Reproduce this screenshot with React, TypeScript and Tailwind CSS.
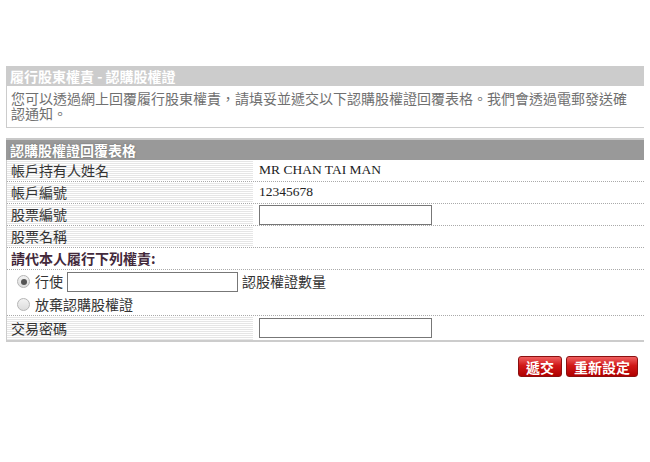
import React from "react";

const stripe =
  "bg-[repeating-linear-gradient(to_bottom,#ffffff_0px,#ffffff_1px,#e6e6e6_1px,#e6e6e6_2px)]";

function Row({ label, children }: { label: string; children?: React.ReactNode }) {
  return (
    <div className="flex h-[22px] border-b border-dotted border-[#aaaaaa]">
      <div className={`w-[246px] shrink-0 ${stripe} flex items-center pl-[4px] text-[14px] text-[#333]`}>
        {label}
      </div>
      <div className="flex-1 flex items-center pl-[6px]">{children}</div>
    </div>
  );
}

function TextBox({ w }: { w: string }) {
  return <div className={`${w} h-[20px] border border-[#777] bg-white`} />;
}

function Radio({ checked }: { checked?: boolean }) {
  return (
    <span className="inline-flex w-[13px] h-[13px] rounded-full border border-[#b5b5b5] bg-[linear-gradient(#f2f2f2,#dcdcdc)] items-center justify-center">
      {checked && <span className="w-[6px] h-[6px] rounded-full bg-[#555]" />}
    </span>
  );
}

export default function App() {
  const cjk = { fontFamily: '"Noto Sans CJK TC", "Noto Sans", sans-serif' };
  const serif = { fontFamily: '"Liberation Serif", serif' };
  return (
    <div className="w-[650px] h-[462px] bg-white pt-[66px]" style={cjk}>
      <div className="ml-[6px] w-[638px]">
        <div className="h-[20px] bg-[#cccccc] flex items-center pl-[4px] text-[14px] font-bold text-white">
          履行股東權責 - 認購股權證
        </div>
        <div className="border-l border-b border-[#cccccc] h-[42px] pl-[4px] pr-[12px] pt-[5px] text-[14px] leading-[15px] text-[#707070]">
          您可以透過網上回覆履行股東權責，請填妥並遞交以下認購股權證回覆表格。我們會透過電郵發送確認通知。
        </div>
        <div className="mt-[10px] h-[22px] bg-[#999999] border-t-2 border-[#c8c8c8] flex items-center pl-[4px] text-[14px] font-bold text-white [text-shadow:0_0_2px_#666]">
          認購股權證回覆表格
        </div>
        <div className="border-l border-[#cccccc] border-b-2 border-b-[#cccccc]">
          <Row label="帳戶持有人姓名">
            <span className="text-[13.5px] text-[#222]" style={serif}>
              MR CHAN TAI MAN
            </span>
          </Row>
          <Row label="帳戶編號">
            <span className="text-[13.5px] text-[#222]" style={serif}>
              12345678
            </span>
          </Row>
          <Row label="股票編號">
            <TextBox w="w-[173px]" />
          </Row>
          <Row label="股票名稱" />
          <div className="h-[22px] border-b border-dotted border-[#aaaaaa] flex items-center pl-[4px] text-[14px] font-bold text-[#43293b]">
            請代本人履行下列權責:
          </div>
          <div className="h-[23px] flex items-center pl-[10px] text-[14px] text-[#333] gap-[4px]">
            <Radio checked />
            <span className="ml-[1px]">行使</span>
            <TextBox w="w-[171px]" />
            <span>認股權證數量</span>
          </div>
          <div className="h-[23px] border-b border-dotted border-[#aaaaaa] flex items-center pl-[10px] text-[14px] text-[#333] gap-[5px]">
            <Radio />
            <span>放棄認購股權證</span>
          </div>
          <div className="flex h-[24px]">
            <div className={`w-[246px] shrink-0 ${stripe} flex items-center pl-[4px] text-[14px] text-[#333]`}>
              交易密碼
            </div>
            <div className="flex-1 flex items-center pl-[6px]">
              <TextBox w="w-[173px]" />
            </div>
          </div>
        </div>
        <div className="flex justify-end gap-[4px] mt-[14px] pr-[6px]">
          <button className="h-[21px] px-[7px] rounded-[3px] border border-[#8a1010] bg-[linear-gradient(#f06060,#d01818_45%,#b00000)] text-white text-[14px] font-bold leading-none">
            遞交
          </button>
          <button className="h-[21px] px-[7px] rounded-[3px] border border-[#8a1010] bg-[linear-gradient(#f06060,#d01818_45%,#b00000)] text-white text-[14px] font-bold leading-none">
            重新設定
          </button>
        </div>
      </div>
    </div>
  );
}
